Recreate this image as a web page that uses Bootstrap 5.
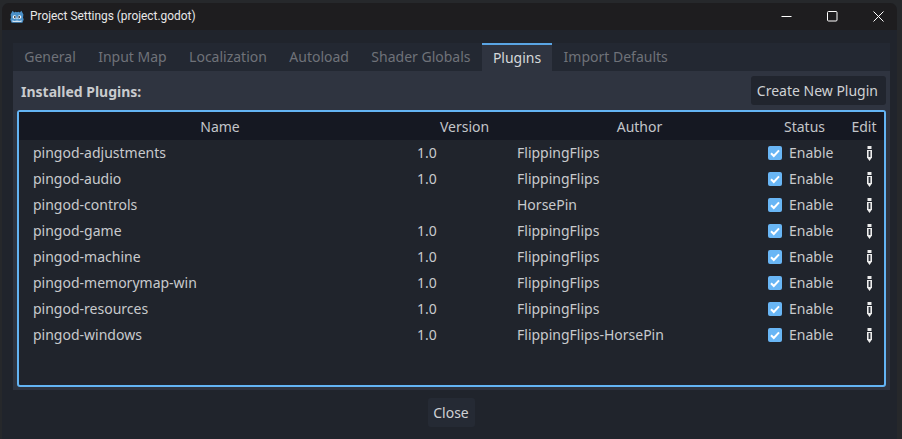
<!DOCTYPE html>
<html lang="en">
<head>
<meta charset="utf-8">
<title>Project Settings</title>
<link href="https://cdn.jsdelivr.net/npm/bootstrap@5.3.0/dist/css/bootstrap.min.css" rel="stylesheet">
<style>
html,body{height:100%;}
body{background:#26282b;font-family:"Noto Sans",sans-serif;font-size:14px;color:#cdcfd2;overflow:hidden;padding:3px 5px 0 2px;}
.win{height:436px;background:#20242c;border-radius:7px 7px 0 0;overflow:hidden;}
.titlebar{height:27px;background:#1e1d1f;color:#e8e8e8;font-family:"Roboto",sans-serif;font-size:11.9px;padding-left:8px;gap:6px;}
.winbtn{width:46px;height:27px;}
.winbtn.lastbtn{width:42px;padding-left:4px;}
.body-area{padding:13px 7px 0 11px;}
.tabstrip{height:28px;background:#232832;}
.tabitem{padding:0 11.2px;height:28px;line-height:28px;color:#6f7279;font-size:14px;}
.tabitem.act{background:#2f3440;color:#d6d8da;border-top:2px solid #5aa5e4;line-height:25px;}
.panel-main{background:#2f3440;height:319px;padding:5px 4px 4px;}
.plug-head{height:29px;margin-bottom:5px;}
.plug-title{font-weight:700;font-size:14px;color:#c9cbce;padding-left:4px;margin-top:1px;}
.gbtn{background:#21252e;color:#cfd1d4;font-size:14px;line-height:19px;padding:5px 8px 5px 6px;border:0;border-radius:3px;}
.gbtn:hover{background:#21252e;color:#cfd1d4;}
.gbtn.closebtn{background:#252a34;padding:5px 6px 5px 5px;}
.treebox{height:277px;border:2px solid #63b4f4;border-radius:3px;background:#20242c;}
.ptable{table-layout:fixed;width:100%;margin:0;--bs-table-bg:transparent;--bs-table-color:#c8cacd;border-collapse:collapse;vertical-align:middle;}
.ptable th,.ptable td{padding:0;border:0;font-weight:400;font-size:14px;box-shadow:none;}
.ptable thead{vertical-align:middle;}
.ptable thead th{height:28px;background:#151822;color:#c3c5c9;text-align:center;}
.ptable tbody td{height:26px;}
.c-name{width:388px;}
.c-ver{width:108px;}
.c-auth{width:247px;}
.c-stat{width:81px;}
.c-edit{width:41px;}
.ptable thead th.c-name{padding-left:14px;}
.ptable thead th.c-ver{padding-left:7px;}
.ptable thead th.c-auth{padding-left:2px;}
.ptable thead th.c-stat{padding-left:4px;}
.ptable thead th.c-edit{padding-left:1px;}
.ptable tbody .c-name{padding:0 0 2px 14px;}
.ptable tbody .c-ver{padding:0 0 2px 10px;}
.ptable tbody .c-auth{padding:0 0 2px 2px;}
.statwrap{padding-left:6px;gap:7px;}
.statwrap span{margin-bottom:2px;}
.gcheck{width:14px;height:14px;background:#69b6f5;border-radius:2px;}
.editic{padding-left:24px;}
.foot{height:51px;padding-top:8px;}
</style>
</head>
<body>
<div class="win d-flex flex-column">
  <div class="titlebar d-flex align-items-center">
    <svg width="14" height="14" viewBox="0 0 14 14"><path d="M2.6.8 L4.2 2.6 L5.4 1.8 L7 2.3 L8.6 1.8 L9.8 2.6 L11.4.8 L13.4 4.6 L13 7.4 L13.7 9.6 L12.4 12.8 L1.6 12.8 L.3 9.6 L1 7.4 L.6 4.6Z" fill="#4a90c8"/><circle cx="4.5" cy="7" r="1.8" fill="#fff"/><circle cx="9.5" cy="7" r="1.8" fill="#fff"/><circle cx="4.8" cy="7.1" r="1" fill="#2f3a44"/><circle cx="9.2" cy="7.1" r="1" fill="#2f3a44"/><rect x="6.5" y="7.6" width="1" height="1.6" fill="#fff"/><path d="M2.2 10.2 4.4 11 7 10.4 9.6 11 11.8 10.2 11.4 12 2.6 12z" fill="#d4e4f0"/></svg>
    <span>Project Settings (project.godot)</span>
    <div class="ms-auto d-flex">
      <div class="winbtn d-flex align-items-center justify-content-center"><svg width="11" height="11" viewBox="0 0 11 11"><path d="M.5 5.5h10" stroke="#fff" fill="none"/></svg></div>
      <div class="winbtn d-flex align-items-center justify-content-center"><svg width="11" height="11" viewBox="0 0 11 11"><rect x=".5" y=".5" width="9.5" height="9.5" rx="1" stroke="#fff" fill="none"/></svg></div>
      <div class="winbtn lastbtn d-flex align-items-center justify-content-center"><svg width="11" height="11" viewBox="0 0 11 11"><path d="M.5.5l10 10M10.5.5l-10 10" stroke="#fff" fill="none"/></svg></div>
    </div>
  </div>
  <div class="body-area flex-grow-1">
    <div class="tabstrip d-flex">
      <div class="tabitem">General</div>
      <div class="tabitem">Input Map</div>
      <div class="tabitem">Localization</div>
      <div class="tabitem">Autoload</div>
      <div class="tabitem">Shader Globals</div>
      <div class="tabitem act">Plugins</div>
      <div class="tabitem">Import Defaults</div>
    </div>
    <div class="panel-main">
      <div class="plug-head d-flex justify-content-between align-items-center">
        <span class="plug-title">Installed Plugins:</span>
        <button type="button" class="btn gbtn">Create New Plugin</button>
      </div>
      <div class="treebox">
        <table class="table ptable">
          <thead><tr><th class="c-name">Name</th><th class="c-ver">Version</th><th class="c-auth">Author</th><th class="c-stat">Status</th><th class="c-edit">Edit</th></tr></thead>
          <tbody id="rows"></tbody>
        </table>
      </div>
    </div>
    <div class="foot d-flex justify-content-center align-items-start">
      <button type="button" class="btn gbtn closebtn">Close</button>
    </div>
  </div>
</div>
<script>
const d=[["pingod-adjustments","1.0","FlippingFlips"],["pingod-audio","1.0","FlippingFlips"],["pingod-controls","","HorsePin"],["pingod-game","1.0","FlippingFlips"],["pingod-machine","1.0","FlippingFlips"],["pingod-memorymap-win","1.0","FlippingFlips"],["pingod-resources","1.0","FlippingFlips"],["pingod-windows","1.0","FlippingFlips-HorsePin"]];
const check='<svg class="gcheck" viewBox="0 0 14 14"><path d="M3 7.2l2.8 2.8L11 4.4" stroke="#fff" stroke-width="2" fill="none"/></svg>';
const pen='<svg class="d-block" width="5" height="15" viewBox="0 0 5 15"><path d="M.5 0h4v3h-4z" fill="#ececec"/><path d="M0 4h5v7.5L2.5 15 0 11.5z" fill="#ececec"/><path d="M1.6 5h1.8v6H1.6z" fill="#30343c"/></svg>';
document.getElementById('rows').innerHTML=d.map(r=>`<tr><td class="c-name">${r[0]}</td><td class="c-ver">${r[1]}</td><td class="c-auth">${r[2]}</td><td class="c-stat"><div class="statwrap d-flex align-items-center">${check}<span>Enable</span></div></td><td class="c-edit"><div class="editic">${pen}</div></td></tr>`).join('');
</script>
<script src="https://cdn.jsdelivr.net/npm/bootstrap@5.3.0/dist/js/bootstrap.bundle.min.js"></script>
</body>
</html>
